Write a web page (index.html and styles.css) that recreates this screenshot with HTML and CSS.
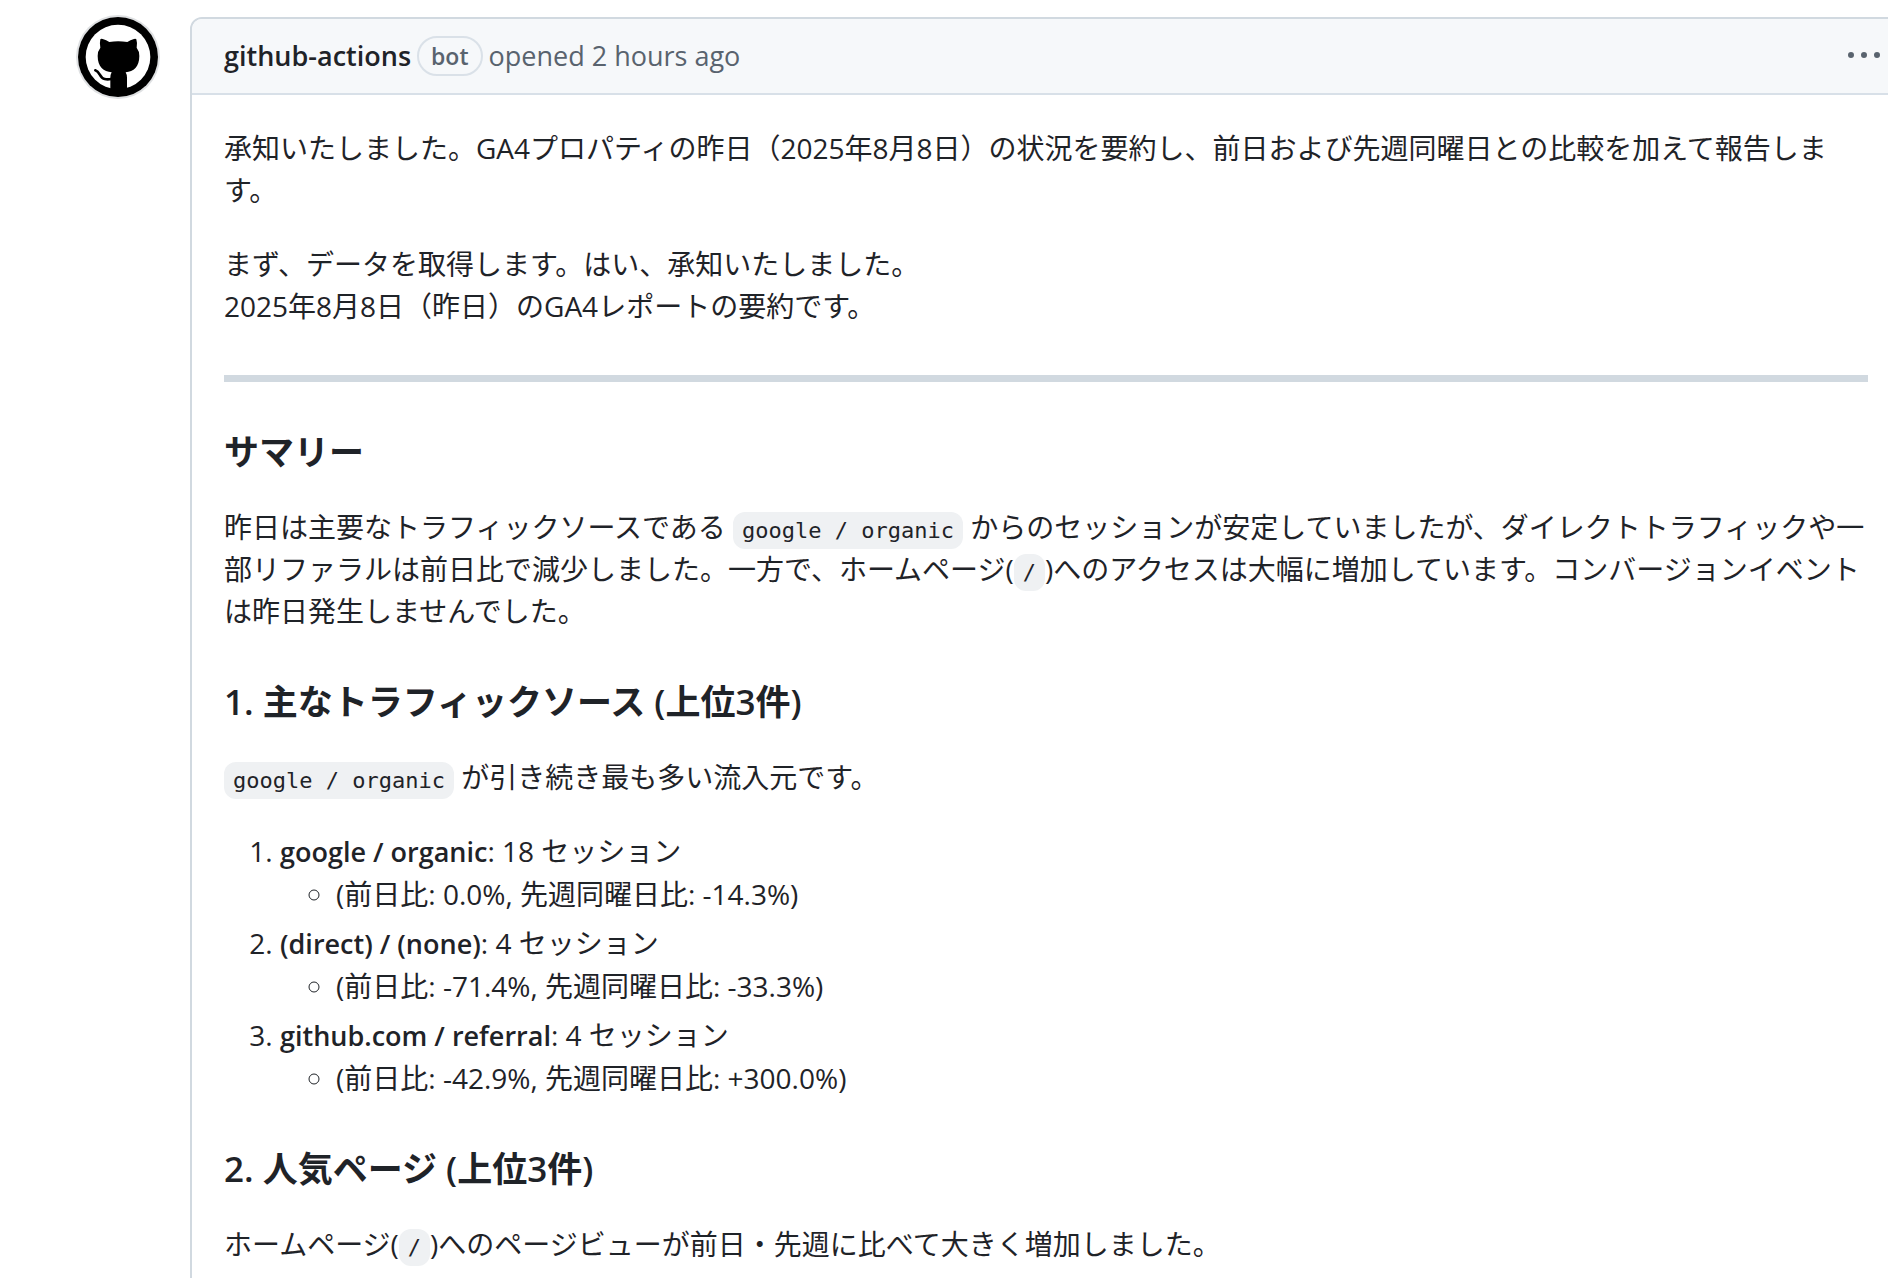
FILE: index.html
```html
<!DOCTYPE html>
<html lang="ja">
<head>
    <meta charset="UTF-8">
    <meta name="viewport" content="width=device-width, initial-scale=1.0">
    <title>GA4レポート</title>
    <link rel="stylesheet" href="styles.css">
</head>
<body>
    <main class="timeline">
        <a class="avatar" href="#" aria-label="github-actions">
            <svg viewBox="23 22 240 240" aria-hidden="true">
                <circle cx="143" cy="142" r="120" fill="#000"/>
                <circle cx="143" cy="142" r="97" fill="#fff"/>
                <path d="M90 89q2-3 7-1 11 3 20 9 26-5 54 0 9-6 20-9 5-2 7 1 4 13 1 25 8 10 8 25c0 33-17 46-41 49q4 7 4 16v46q-27 12-50 0v-46q0-9 4-16c-24-3-42-16-42-49q0-15 8-25-3-12 0-25z"/>
                <path d="M75 182c15 4 12 23 28 26q8 2 20 0" fill="none" stroke="#000" stroke-width="8" stroke-linecap="round"/>
            </svg>
        </a>

        <article class="comment">
            <header class="comment-header">
                <a class="author" href="#">github-actions</a>
                <span class="label">bot</span>
                <span class="time">opened 2 hours ago</span>
                <button class="menu" type="button" aria-label="メニュー">
                    <svg viewBox="0 0 16 16" aria-hidden="true">
                        <path d="M8 9a1.5 1.5 0 1 0 0-3 1.5 1.5 0 0 0 0 3ZM1.500 9a1.500 1.500 0 1 0 0-3 1.500 1.500 0 0 0 0 3Zm13 0a1.500 1.500 0 1 0 0-3 1.500 1.500 0 0 0 0 3Z"/>
                    </svg>
                </button>
            </header>

            <div class="comment-body">
                <p>承知いたしました。GA4プロパティの昨日（2025年8月8日）の状況を要約し、前日および先週同曜日との比較を加えて報告します。</p>
                <p>まず、データを取得します。はい、承知いたしました。<br>2025年8月8日（昨日）のGA4レポートの要約です。</p>

                <hr>

                <h3>サマリー</h3>
                <p>昨日は主要なトラフィックソースである <code>google / organic</code> からのセッションが安定していましたが、ダイレクトトラフィックや一部リファラルは前日比で減少しました。一方で、ホームページ(<code>/</code>)へのアクセスは大幅に増加しています。コンバージョンイベントは昨日発生しませんでした。</p>

                <h3>1. 主なトラフィックソース (上位3件)</h3>
                <p><code>google / organic</code> が引き続き最も多い流入元です。</p>
                <ol>
                    <li><strong>google / organic</strong>: 18 セッション
                        <ul>
                            <li>(前日比: 0.0%, 先週同曜日比: -14.3%)</li>
                        </ul>
                    </li>
                    <li><strong>(direct) / (none)</strong>: 4 セッション
                        <ul>
                            <li>(前日比: -71.4%, 先週同曜日比: -33.3%)</li>
                        </ul>
                    </li>
                    <li><strong>github.com / referral</strong>: 4 セッション
                        <ul>
                            <li>(前日比: -42.9%, 先週同曜日比: +300.0%)</li>
                        </ul>
                    </li>
                </ol>

                <h3>2. 人気ページ (上位3件)</h3>
                <p>ホームページ(<code>/</code>)へのページビューが前日・先週に比べて大きく増加しました。</p>
            </div>
        </article>
    </main>
</body>
</html>
```
FILE: styles.css
```css
* {
    box-sizing: border-box;
}

body {
    margin: 0;
    overflow: hidden;
    background-color: #fff;
    color: #1f2328;
    font-family: "Open Sans", "Noto Sans CJK JP", sans-serif;
    font-size: 28px;
    line-height: 42px;
}

a {
    color: inherit;
    text-decoration: none;
}

/* Layout */
.timeline {
    display: flex;
    align-items: flex-start;
    gap: 32px;
    margin-right: -14px;
    padding: 17px 0 0 78px;
}

.avatar {
    flex: none;
    width: 80px;
    height: 80px;
    border-radius: 50%;
    box-shadow: 0 0 0 2px #dfe1e3;
}

.avatar svg {
    display: block;
}

.comment {
    flex: 1;
    min-width: 0;
    border: 2px solid #d1d9e0;
    border-radius: 12px;
}

/* Header */
.comment-header {
    display: flex;
    align-items: center;
    gap: 6px;
    padding: 16px 20px 16px 32px;
    border-bottom: 2px solid #d8e0e8;
    border-radius: 10px 10px 0 0;
    background-color: #f6f8fa;
    font-size: 27px;
}

.author {
    font-weight: 600;
}

.label {
    padding: 0 12px;
    border: 2px solid #dae1e8;
    border-radius: 20px;
    color: #59636e;
    font-size: 23px;
    font-weight: 600;
    line-height: 36px;
}

.time {
    color: #59636e;
}

.menu {
    margin-left: auto;
    padding: 0;
    border: none;
    background: none;
    cursor: pointer;
}

.menu svg {
    display: block;
    width: 32px;
    height: 32px;
    fill: #59636e;
}

/* Body */
.comment-body {
    padding: 32px;
}

p, ol {
    margin: 0 0 32px;
}

hr {
    height: 7px;
    margin: 48px 0;
    border: none;
    background-color: #d1d9e0;
}

h3 {
    margin: 48px 0 32px;
    font-size: 35px;
    font-weight: 600;
    line-height: 44px;
}

code {
    padding: 6px 9px;
    border-radius: 12px;
    background-color: #eff1f3;
    font-family: "DejaVu Sans Mono", monospace;
    font-size: 22px;
    line-height: 22px;
}

ol {
    padding-left: 56px;
}

ul {
    margin: 0;
    padding-left: 56px;
}

ol > li + li {
    margin-top: 7px;
}

strong {
    font-size: 27px;
    font-weight: 600;
}
```
